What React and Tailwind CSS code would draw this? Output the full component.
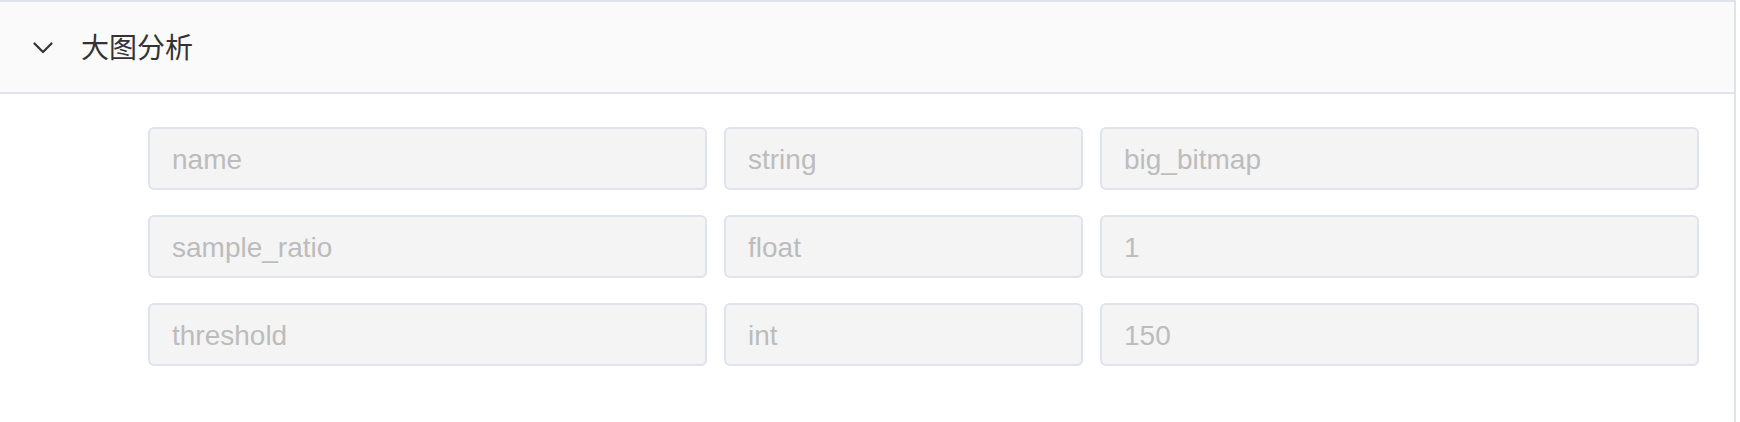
import React from 'react';

const rows = [
  ['name', 'string', 'big_bitmap'],
  ['sample_ratio', 'float', '1'],
  ['threshold', 'int', '150'],
];

function Field({ value, className }) {
  return (
    <div
      className={`h-[63px] border-2 border-[#dfe3ee] bg-[#f4f4f5] rounded-[6px] px-[22px] pt-[2px] flex items-center text-[28px] text-[#bcbcbc] ${className}`}
    >
      {value}
    </div>
  );
}

export default function App() {
  return (
    <div className="w-[1740px] h-[422px] bg-white font-['Liberation_Sans',Arial,sans-serif]">
      <div className="w-[1736px] h-full border-t-2 border-r-2 border-[#dfe3ee]">
        {/* collapse header */}
        <div className="h-[92px] bg-[#fafafa] border-b-2 border-[#dfe3ee] flex items-center pl-[33px]">
          <svg width="20" height="12" viewBox="0 0 20 12" fill="none" className="mt-[2px]">
            <path d="M1.5 1.5 L10 10 L18.5 1.5" stroke="#333" strokeWidth="2.2" strokeLinecap="round" strokeLinejoin="round" />
          </svg>
          <span className="ml-[28px] mb-[2px] text-[28px] text-[#333] font-['Noto_Sans_CJK_SC',sans-serif] leading-none">
            大图分析
          </span>
        </div>

        {/* params */}
        <div className="pt-[33px] pl-[148px] pr-[35px] flex flex-col gap-[25px]">
          {rows.map(([key, type, val]) => (
            <div key={key} className="flex gap-[17px]">
              <Field value={key} className="w-[559px]" />
              <Field value={type} className="w-[359px]" />
              <Field value={val} className="flex-1" />
            </div>
          ))}
        </div>
      </div>
    </div>
  );
}
